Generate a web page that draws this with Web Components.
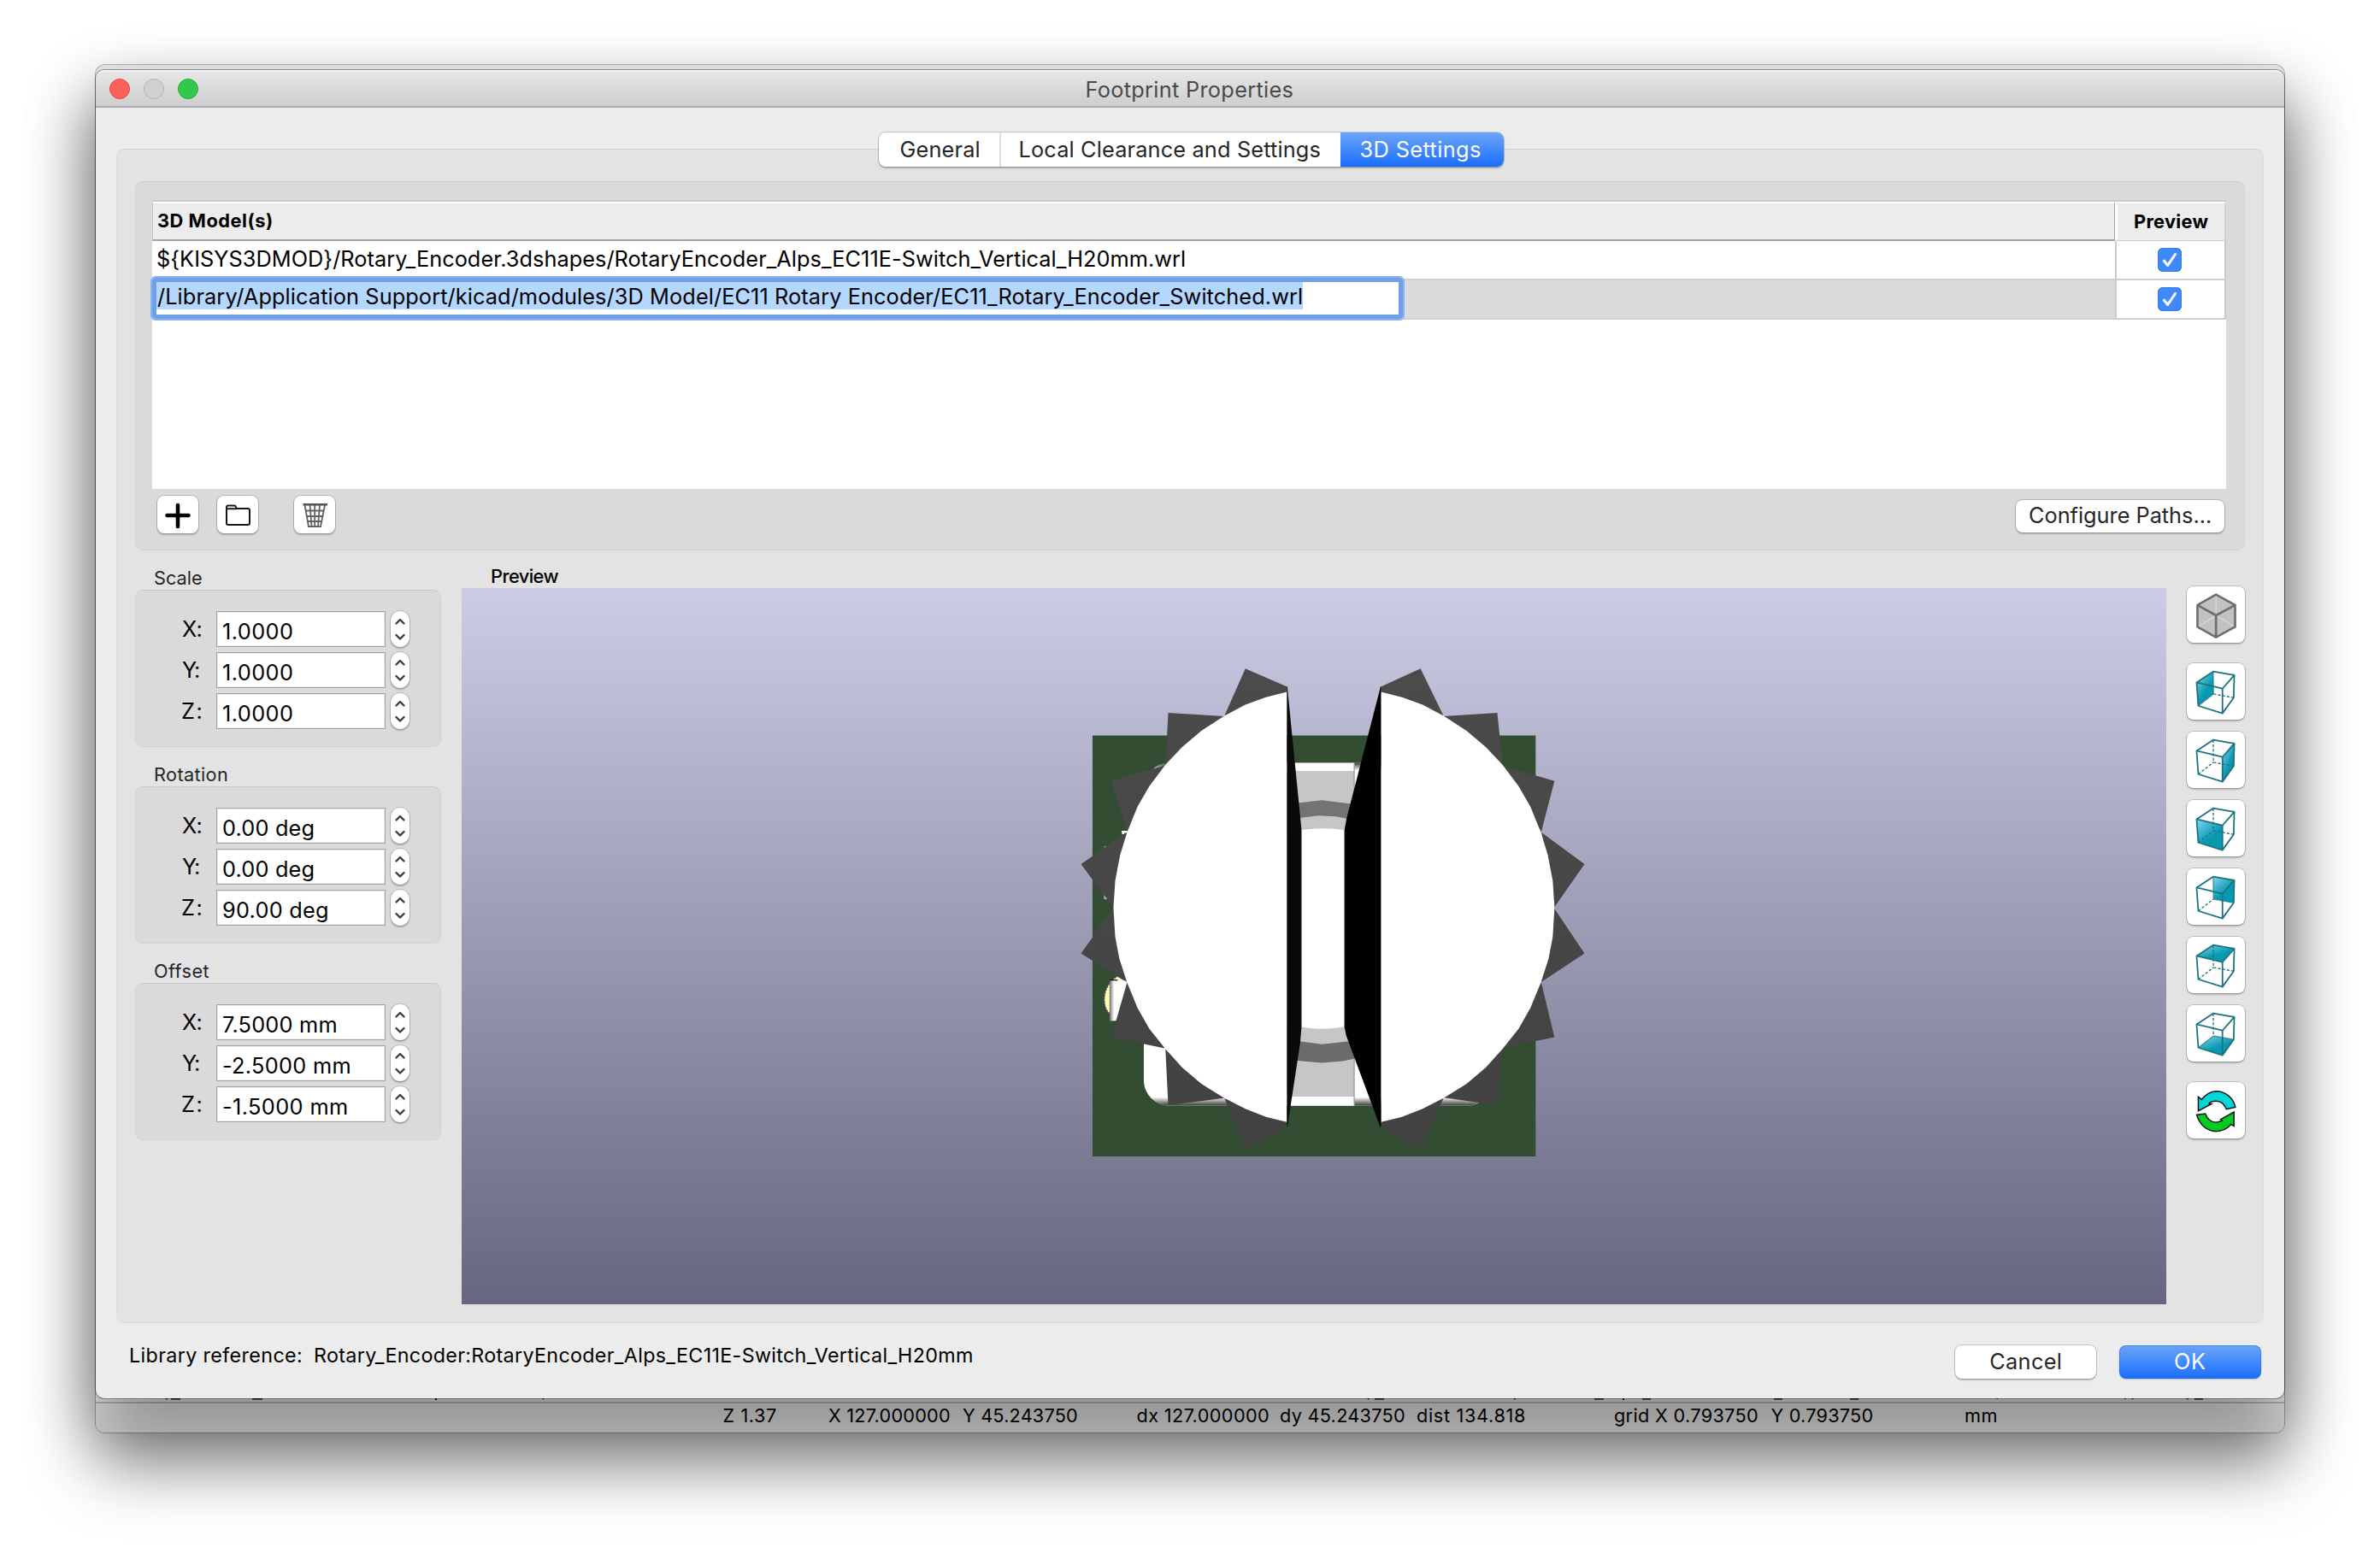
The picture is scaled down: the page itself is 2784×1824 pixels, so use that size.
<!DOCTYPE html>
<html lang="en">
<head>
<meta charset="utf-8">
<title>Footprint Properties</title>
<style>
html,body{margin:0;width:2784px;height:1824px;background:#fff;overflow:hidden}
body{font-family:Inter,"Liberation Sans",sans-serif;color:#000}
</style>
</head>
<body>
<app-desktop></app-desktop>
<script>
const define=(name,css,html,extra)=>{
  const t=document.createElement('template');
  customElements.define(name,class extends HTMLElement{
    connectedCallback(){
      if(this.shadowRoot)return;
      const root=this.attachShadow({mode:'open'});
      t.innerHTML='<style>*{box-sizing:border-box}'+css+'</style>'+(typeof html==='function'?html(this):html);
      root.appendChild(t.content.cloneNode(true));
      if(extra)extra(this,root);
    }
  });
};

/* Single line of text whose ink spans exactly `w` pixels. */
const measure=document.createElement('canvas').getContext('2d');
define('fit-text',
  ':host{display:block;white-space:pre;flex:none;line-height:28px}span{display:inline-block}',
  '<span></span>',
  (el,root)=>{
    const s=root.querySelector('span'),text=el.getAttribute('text'),size=el.getAttribute('size')||25.3,
      weight=el.getAttribute('weight')||400,w=+el.getAttribute('w');
    s.textContent=text;
    measure.font=`${weight} ${size}px Inter, "Liberation Sans", sans-serif`;
    const m=measure.measureText(text),ink=m.actualBoundingBoxLeft+m.actualBoundingBoxRight;
    el.style.width=w+'px';
    s.style.cssText=`font-size:${size}px;font-weight:${weight};letter-spacing:${(w-ink)/Math.max(1,text.length-1)}px;margin-left:${m.actualBoundingBoxLeft}px`;
  });

define('push-button',
  `:host{display:flex;align-items:center;justify-content:center;flex:none;background:#fff;border-radius:8px;color:#262626;
   box-shadow:0 0 0 1px rgba(0,0,0,.17),0 2px 2px rgba(0,0,0,.2)}
   ::slotted(fit-text){margin-top:2px}
   :host([primary]){color:#fff;background:linear-gradient(#6ba5f8,#1a6dfd);box-shadow:0 0 0 1px rgba(30,100,230,.45) inset,0 1px 2px rgba(0,0,0,.2)}`,
  '<slot></slot>');

define('tab-strip',
  `:host{display:flex;height:40px;width:731px;border-radius:8px;background:#fff;box-shadow:0 0 0 1px rgba(0,0,0,.17),0 2px 2px rgba(0,0,0,.22)}
   div{display:flex;align-items:center;color:#262626;padding-top:2px}
   .a{width:143px;padding-left:26px;border-right:2px solid #e1e1e1}.b{width:397px;padding-left:23px}
   .c{flex:1;padding-left:24px;color:#fff;background:linear-gradient(#6ba5f8,#1a6dfd);border-radius:0 8px 8px 0}`,
  `<div class="a"><fit-text text="General" w="92"></fit-text></div>
   <div class="b"><fit-text text="Local Clearance and Settings" w="351"></fit-text></div>
   <div class="c"><fit-text text="3D Settings" w="140.5"></fit-text></div>`);

define('check-box',
  ':host{display:block;width:28px;height:28px;border-radius:6px;background:#3f89f8;box-shadow:0 0 0 1px #347ff0 inset}svg{display:block}',
  '<svg width="28" height="28" viewBox="0 0 28 28"><path d="M7.5 15.2l4.2 5.3 8.8-13" fill="none" stroke="#fff" stroke-width="3" stroke-linecap="round" stroke-linejoin="round"/></svg>');

define('model-table',
  `:host{display:block;background:#fff;height:338px;border-top:2px solid #cbcbcb}
   .r{display:grid;grid-template-columns:2296px 130px;grid-template-rows:46px;height:46px}
   .r>div{display:flex;align-items:center}
   .h>div{background:#ececec;border-top:2px solid #fff}
   .h>.n{border-bottom:2px solid #a3a3a3;border-right:1px solid #a3a3a3;border-left:1px solid #c4c4c4;padding-left:6px}
   .h>.p{border-left:3px solid #fff;border-bottom:1px solid #ccc;border-right:2px solid #d0d0d0;padding-left:20px}
   .b>.n{padding-left:6px;border-bottom:2px solid #cfcfcf}
   .b>.p{justify-content:center;border:2px solid #cfcfcf;border-top:0;border-left-color:#cbcbcb;border-right-color:#c9c9c9;padding-right:2px}
   .s>.n{background:#dadada;padding:0;align-items:flex-start}
   .e{width:1467px;height:52px;margin:-5px 0 0 -2px;flex:none;border:2px solid #87b1f3;border-radius:6px;background:#fff;z-index:1;
      box-shadow:0 0 0 5px #6f9fe6 inset;padding:5px;position:relative}
   .sel{background:#b3d7ff;height:32px;width:1341px;padding:5px 0 0 1px;display:flex;align-items:center}`,
  `<div class="r h"><div class="n"><fit-text text="3D Model(s)" size="21.8" weight="700" w="133"></fit-text></div>
   <div class="p"><fit-text text="Preview" size="21.8" weight="700" w="86.5"></fit-text></div></div>
   <div class="r b"><div class="n"><fit-text text="\${KISYS3DMOD}/Rotary_Encoder.3dshapes/RotaryEncoder_Alps_EC11E-Switch_Vertical_H20mm.wrl" w="1202"></fit-text></div><div class="p"><check-box></check-box></div></div>
   <div class="r b s"><div class="n"><div class="e"><div class="sel"><fit-text text="/Library/Application Support/kicad/modules/3D Model/EC11 Rotary Encoder/EC11_Rotary_Encoder_Switched.wrl" w="1339"></fit-text></div></div></div><div class="p"><check-box></check-box></div></div>`);

define('table-tools',
  `:host{display:flex;align-items:center;margin-top:8px;padding:0 2px 0 6px;height:44px}
   push-button{width:48px;height:44px}.f{margin-left:22px}.t{margin-left:42px}.c{margin-left:auto;width:244px;height:38px;margin-top:3px}`,
  `<push-button><svg width="48" height="44" viewBox="0 0 48 44"><path d="M24 11v25M11.500 23h25" stroke="#000" stroke-width="4.600" stroke-linecap="round"/></svg></push-button>
   <push-button class="f"><svg width="48" height="44" viewBox="0 0 48 44" fill="none" stroke="#161616" stroke-width="2"><path d="M11 33.500V13.500q0-2 2-2h6.500q2 0 2.500 1.500l.8 2H36q2 0 2 2V32q0 2-2 2H13q-2 0-2-2zM11 15.200h12"/></svg></push-button>
   <push-button class="t"><svg width="48" height="44" viewBox="0 0 48 44" fill="none" stroke="#626262" stroke-width="1.800"><path d="M12.500 11l4.500 25h14L36 11M18.500 11l2 25M24.200 11v25M30 11l-2 25M13 17.500h22M14.200 24h20M15.500 30h17.500M17 36h14.500"/><path d="M10.500 10.300H39" stroke="#555" stroke-width="2.600"/></svg></push-button>
   <push-button class="c"><fit-text text="Configure Paths..." w="212"></fit-text></push-button>`);

define('spin-row',
  `:host{display:flex;height:42px;margin-bottom:6px;padding-left:54px;align-items:center}
   .l{width:40px;padding-top:2px}.f{width:198px;height:42px;background:#fff;border:1px solid #a2a2a2;box-shadow:0 0 0 1px #ececec inset;padding:8px 0 0 7px;display:flex;align-items:center}
   .s{width:22px;height:42px;margin-left:6px;border-radius:11px;background:#fff;box-shadow:0 0 0 1px rgba(0,0,0,.15),0 2px 2px rgba(0,0,0,.22)}svg{display:block}`,
  el=>`<div class="l"><fit-text text="${el.getAttribute('axis')}:" w="${el.getAttribute('axis')==='Y'?20:22.500}"></fit-text></div>
   <div class="f"><fit-text text="${el.getAttribute('value')}" w="${el.getAttribute('w')}"></fit-text></div>
   <div class="s"><svg width="22" height="42" viewBox="0 0 22 42" fill="none" stroke="#3c3c3c" stroke-width="2.400" stroke-linecap="round" stroke-linejoin="round"><path d="M6.500 14.500l4.500-4.500 4.500 4.500M6.500 28l4.500 4.500 4.500-4.500"/></svg></div>`);

define('group-box',
  `:host{display:block}.t{height:46px;padding:18px 0 0 23px;color:#262626}
   .b{height:184px;border:1px solid #d3d3d3;border-top-color:#c9c9c9;border-radius:9px;background:#dadada;padding-top:24px}`,
  el=>`<div class="t"><fit-text text="${el.getAttribute('label')}" size="21.700" w="${el.getAttribute('w')}"></fit-text></div><div class="b"><slot></slot></div>`);

const half='<path d="M650 125L590 141 531 163 471 196 405 240 350 288 302 341 256 404 222 465 192 541 172 608 158 685 153 763 158 850 170 915 192 985 222 1060 256 1122 302 1182 350 1237 405 1285 471 1327 531 1359 590 1383 650 1398Z" fill="#fff"/>';
define('model-view',
  ':host{display:block;width:1994px;height:838px;background:linear-gradient(#cccce5,#66667f)}svg{display:block}',
  `<svg width="1994" height="838" viewBox="540 688 1994 838"><defs>
   <linearGradient id="tooth" gradientUnits="userSpaceOnUse" x1="0" y1="60" x2="0" y2="1480"><stop offset="0" stop-color="#4b4b4b"/><stop offset="1" stop-color="#424242"/></linearGradient>
   <linearGradient id="edge" x1="0" y1="0" x2="0" y2="1"><stop offset="0" stop-color="#fff"/><stop offset="1" stop-color="#383838"/></linearGradient>
   <linearGradient id="edgeUp" x1="0" y1="1" x2="0" y2="0"><stop offset="0" stop-color="#fff"/><stop offset="1" stop-color="#383838"/></linearGradient>
   <linearGradient id="pin"><stop offset="0" stop-color="#444"/><stop offset=".2" stop-color="#999"/><stop offset="1" stop-color="#fff"/></linearGradient>
   <clipPath id="body"><rect x="240" y="335" width="1000" height="1015" rx="75"/></clipPath></defs>
   <g transform="translate(1240 760) scale(.408163 .395408)">
   <path d="M93 254H1363V1500H93Z" fill="#334d33"/>
   <g clip-path="url(#body)"><path d="M240 335H1270V1350H240Z" fill="#fff"/><path d="M240 1324H1270V1350H240Z" fill="url(#edge)"/><path d="M240 335H1270V358H240Z" fill="url(#edgeUp)"/></g>
   <path d="M640 335H843V1350H640Z" fill="#fff"/><path d="M640 359H843V1323H640Z" fill="#c6c6c6"/><path d="M843 335V1350" stroke="#999" stroke-width="3"/>
   <path d="M680 454L750 446 840 457 825 501 790 494 740 491 680 499Z" fill="#737373"/>
   <path d="M680 1158L750 1168 830 1159 850 1209 810 1218 750 1223 670 1215Z" fill="#6b6b6b"/>
   <path d="M690 534Q752 524 817 534V1116Q752 1128 690 1116Z" fill="#fff"/>
   <path d="M176 536H194V542L184 543V546H178Z" fill="#fff"/><path d="M127 583h7M127 583v6M127 727v11h8z" stroke="#b89ac4" stroke-width="2" fill="#d6b2ce"/>
   <path d="M192 984L165 967C118 995 120 1060 143 1077V985Z" fill="#ffffb0" stroke="#7b5a80" stroke-width="3" stroke-dasharray="6 3"/>
   <path d="M143 979H200V1098H143Z" fill="#fff"/><path d="M143 979H155V1098H143Z" fill="url(#pin)"/><path d="M143 978h22" stroke="#000" stroke-width="3"/>
   <path d="M651 108L692 533V1116L688 1165 651 1416Z" fill="#0a0a0a"/><path d="M919 108L821 500 815 535V1116L820 1142 919 1416Z" fill="#000"/>
   <path d="M531 56L651 110V130L471 196ZM310 187L471 197 302 341ZM147 389L300 343 192 539ZM60 635L190 541 153 763ZM60 899L153 765 192 984ZM147 1147L192 985 300 1180ZM310 1348L302 1182 471 1327ZM531 1479L471 1327 651 1398V1415Z" fill="url(#tooth)"/>
   <path d="M1033 56L919 110V130L1099 196ZM1253 187L1099 197 1269 343ZM1417 389L1270 345 1379 540ZM1503 635L1380 541 1416 763ZM1503 899L1416 765 1379 984ZM1417 1147L1379 985 1270 1178ZM1253 1348L1268 1180 1100 1326ZM1033 1479L1099 1327 919 1398V1415Z" fill="url(#tooth)"/>
   ${half}<g transform="translate(1570 0) scale(-1 1)">${half}</g>
   <path d="M651 110V1410M919 110V1410" stroke="#000" stroke-width="1.500"/><path d="M692 533V1116M815 535V1116" stroke="#888" stroke-width="2"/>
   </g></svg>`);

/* Wireframe cube corners shared by the view buttons. */
const P={A:'35 67',B:'94 28',C:'169 41',D:'127 89',E:'41 150',F:'127 177',G:'167 121',H:'95 108'};
const faces={left:'ABHE',right:'DCGF',front:'ADFE',back:'BCGH',top:'ABCD',bottom:'EHGF'};
const cube=face=>{
  const p=k=>P[k],poly=faces[face].split('').map(p).join(' ');
  const hidden=['BH','EH','HG'].map(e=>{
    const solid=faces[face].includes(e[0])&&faces[face].includes(e[1]);
    return `<path d="M${p(e[0])}L${p(e[1])}" ${solid?'stroke-opacity=".7"':'stroke-dasharray="10 6"'} stroke-width="4"/>`}).join('');
  return `<defs><linearGradient id="g" x1="0" y1="0" x2=".7" y2="1"><stop offset="0" stop-color="#86d6f2"/><stop offset=".65" stop-color="#0899b0"/></linearGradient></defs>
   <polygon points="${poly}" fill="url(#g)"/><g fill="none" stroke="#1c737f" stroke-width="5.500" stroke-linejoin="round"><path d="M${p('A')}L${p('B')} ${p('C')} ${p('D')}Z"/><path d="M${p('A')}L${p('E')} ${p('F')} ${p('G')} ${p('C')}M${p('D')}L${p('F')}"/>${hidden}</g>`;
};
const icons={
  iso:`<path d="M104 27L173 64V144L104 181 38 144V64Z" fill="#c2c2c2"/><path d="M104 27V102M38 144L104 102 173 144" stroke="#d4d4d4" stroke-width="5" fill="none"/><path d="M104 28L172 65V143L104 180 38 143V65ZM38 65L104 102 172 65M104 102V180" fill="none" stroke="#6e6e6e" stroke-width="8" stroke-linejoin="round"/>`,
  refresh:`<g stroke="#111" stroke-width="4.500"><path d="M41 51L53 61Q75 32 104 31C140 31 167 58 173 88L141 95C133 74 118 66 104 66Q88 66 80 74L88 76 41 101Z" fill="#00d8d8"/><path d="M35 115L66 111C73 130 88 142 104 142Q118 140 126 135L121 131 168 105V155L157 149Q140 173 104 174C70 174 45 148 35 115Z" fill="#0c2"/></g>`
};
define('view-button',':host{display:block;margin-bottom:14px}push-button{width:68px;height:66px}svg{display:block}',
  el=>{const k=el.getAttribute('icon');return `<push-button><svg width="69" height="67" viewBox="0 0 207 201">${icons[k]||cube(k)}</svg></push-button>`});

define('settings-page',
  `:host{display:flex;flex-direction:column;margin:48px 24px 0;height:1374px;border:1px solid #dcdcdc;border-top-color:#d0d0d0;border-radius:9px;background:#e3e3e3}
   tab-strip{align-self:center;margin:-20px 0 0 2px;flex:none}
   .m{margin:17px 21px 0;height:432px;flex:none;border:1px solid #d3d3d3;border-top-color:#c9c9c9;border-radius:9px;background:#dadada;padding:21px 21px 0 19px}
   .c{display:flex;gap:24px;padding:0 21px}.g{width:358px}.p{padding-top:16px}.p fit-text{margin:0 0 0 35px;height:28px}
   .v{padding-top:42px}.gap{margin-bottom:24px}`,
  `<tab-strip></tab-strip><div class="m"><model-table></model-table><table-tools></table-tools></div>
   <div class="c"><div class="g">
   <group-box label="Scale" w="55"><spin-row axis="X" value="1.0000" w="81"></spin-row><spin-row axis="Y" value="1.0000" w="81"></spin-row><spin-row axis="Z" value="1.0000" w="81"></spin-row></group-box>
   <group-box label="Rotation" w="85"><spin-row axis="X" value="0.00 deg" w="105.500"></spin-row><spin-row axis="Y" value="0.00 deg" w="105.500"></spin-row><spin-row axis="Z" value="90.00 deg" w="122"></spin-row></group-box>
   <group-box label="Offset" w="63.500"><spin-row axis="X" value="7.5000 mm" w="132.500"></spin-row><spin-row axis="Y" value="-2.5000 mm" w="148.500"></spin-row><spin-row axis="Z" value="-1.5000 mm" w="145"></spin-row></group-box></div>
   <div class="p"><fit-text text="Preview" size="21.800" weight="500" w="78.500"></fit-text><model-view></model-view></div>
   <div class="v"><view-button icon="iso" class="gap"></view-button><view-button icon="left"></view-button><view-button icon="right"></view-button><view-button icon="front"></view-button><view-button icon="back"></view-button><view-button icon="top"></view-button><view-button icon="bottom" class="gap"></view-button><view-button icon="refresh"></view-button></div></div>`);

define('title-bar',
  `:host{display:grid;grid-template-columns:1fr auto 1fr;align-items:center;height:44px;background:linear-gradient(#e6e6e6,#cecece);border-top:2px solid #f3f3f3;border-bottom:2px solid #ababab;border-radius:10px 10px 0 0;color:#4a4a4a;box-sizing:border-box}
   fit-text{margin-top:4px}
   .l{display:flex;gap:16px;padding-left:16px}i{width:24px;height:24px;border-radius:50%;border:1px solid #e14942;background:#fc605b}
   i+i{background:#d1d1d1;border-color:#b4b4b4}i+i+i{background:#34c84a;border-color:#27a839}`,
  '<div class="l"><i></i><i></i><i></i></div><fit-text text="Footprint Properties" w="241"></fit-text><span></span>');

define('dialog-footer',
  `:host{display:flex;padding:26px 27px 0 41px}.a,.b{flex:none;margin-top:-2px}.b{margin-left:17px}
   push-button{width:165px;height:39px}.c{margin-left:auto}.o{margin-left:27px;width:166px}`,
  `<div class="a"><fit-text text="Library reference:" size="23.300" w="199"></fit-text></div><div class="b"><fit-text text="Rotary_Encoder:RotaryEncoder_Alps_EC11E-Switch_Vertical_H20mm" size="23.300" w="768"></fit-text></div>
   <push-button class="c"><fit-text text="Cancel" w="82.500"></fit-text></push-button><push-button primary class="o"><fit-text text="OK" w="36"></fit-text></push-button>`);

define('dialog-window',
  `:host{display:block;background:#ececec;border-radius:10px;box-shadow:0 0 0 1px rgba(0,0,0,.35),0 40px 80px rgba(0,0,0,.4)}`,
  '<title-bar></title-bar><settings-page></settings-page><dialog-footer></dialog-footer>');

define('editor-window',
  `:host{display:flex;flex-direction:column;justify-content:flex-end;background:#e8e8e8;border-radius:11px;box-shadow:0 0 0 1px rgba(0,0,0,.28),0 40px 80px rgba(0,0,0,.4)}
   svg{display:block}
   .s{height:36px;border-top:2px solid #b4b4b4;border-radius:0 0 10px 10px;background:linear-gradient(#e4e4e4,#d3d3d3);display:flex;align-items:center;padding:0 0 4px 734px}`,
  `<svg width="2560" height="6" viewBox="112 1636 2560 6" fill="none" stroke="#000" stroke-width="2"><path d="M194 1639l3-3M200 1638.500h11M295 1638.500h12M510 1636v4M635 1639l2-3M1600 1639l3-3M1608 1638.500h11M1771 1639l3-3M1865 1638.500h11M1899 1636v4M1921 1638.500h10M2075 1638.500h10M2164 1638.500h10M2324 1636v2M2334 1636l3 2.500M2485 1638.500l3-2M2494 1639l2-3M2558 1639l3-3M2567 1638.500h10"/><path d="M155 1636.500h30M215 1636.500h75M310 1636.500h48M450 1636.500h200M660 1636.500h70M1380 1636.500h60M1625 1636.500h140M1780 1636.500h80M1940 1636.500h125M2090 1636.500h70M2350 1636.500h120M2500 1636.500h50M2585 1636.500h75" stroke="#333" stroke-width="1" stroke-dasharray="4 9"/></svg>
   <div class="s"></div>`,
  (el,root)=>{
    const bar=root.querySelector('.s');let x=846;
    [['Z 1.37',846.5,61.5],['X 127.000000',969,142],['Y 45.243750',1126,134],['dx 127.000000',1330.5,153.5],['dy 45.243750',1498,145],['dist 134.818',1658,126],['grid X 0.793750',1889,167],['Y 0.793750',2071.5,119],['mm',2299,36.5]].forEach(([t,l,w])=>{
      const f=document.createElement('fit-text');
      f.setAttribute('text',t);f.setAttribute('w',w);f.setAttribute('size','21.7');f.style.marginLeft=(l-x)+'px';x=l+w;bar.appendChild(f);
    });
  });

define('app-desktop',
  `:host{display:block;position:relative;width:2784px;height:1824px;background:#fff;overflow:hidden}
   editor-window{position:absolute;left:112px;top:76px;width:2560px;height:1600px}
   dialog-window{position:absolute;left:112px;top:82px;width:2560px;height:1554px}`,
  '<editor-window></editor-window><dialog-window></dialog-window>');
</script>
</body>
</html>
